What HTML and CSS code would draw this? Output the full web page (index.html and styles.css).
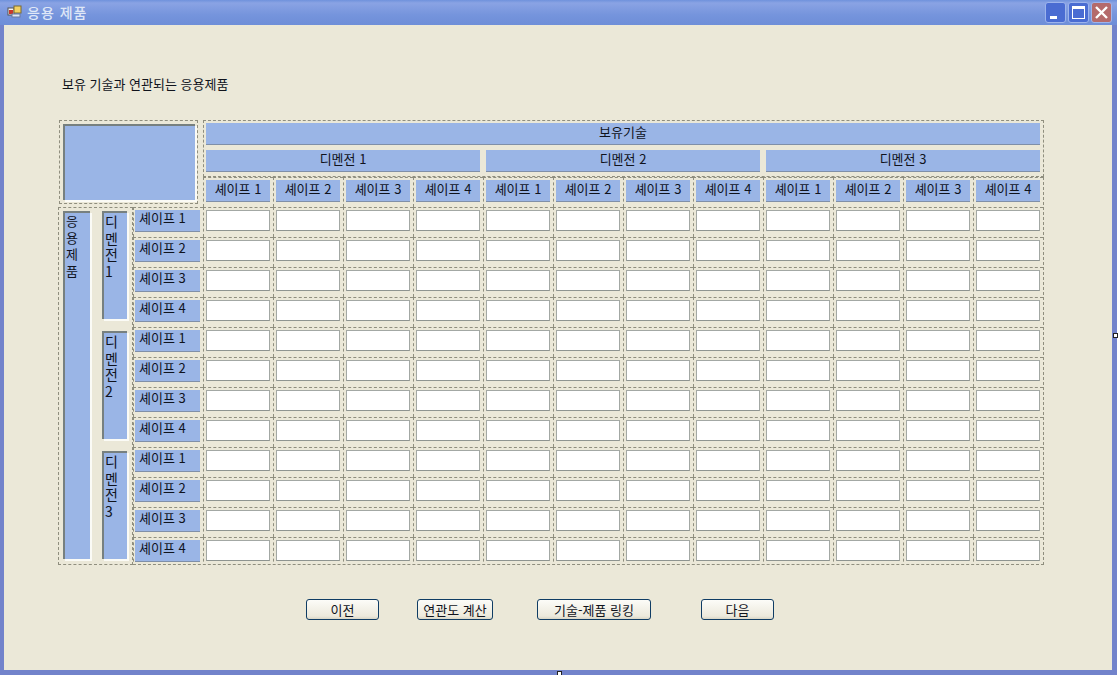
FILE: index.html
```html
<!DOCTYPE html>
<html lang="ko">
<head>
<meta charset="utf-8">
<title>응용 제품</title>
<link rel="stylesheet" href="styles.css">
</head>
<body>
<div class="window">
  <div class="titlebar">
    <svg class="app-icon" width="16" height="16" viewBox="0 0 16 16"><rect x="1" y="4" width="6" height="7" fill="#f4f4f4" stroke="#555"/><rect x="2" y="6" width="4" height="4" fill="#c8382c"/><rect x="7" y="2" width="7" height="7" fill="#f3d163" stroke="#7a6a30"/><rect x="5" y="10" width="8" height="3" fill="#dfe6f4" stroke="#6b7aa0"/></svg>
    <span class="title">응용 제품</span>
    <div class="controls">
      <span class="ctl"><svg width="21" height="21" viewBox="0 0 21 21"><rect x="5" y="14" width="7" height="3" fill="#fff"/></svg></span>
      <span class="ctl"><svg width="21" height="21" viewBox="0 0 21 21"><rect x="4.5" y="4.5" width="12" height="12" fill="none" stroke="#fff"/><rect x="4" y="4" width="13" height="3" fill="#fff"/></svg></span>
      <span class="ctl close"><svg width="21" height="21" viewBox="0 0 21 21"><path d="M5 5L16 16M16 5L5 16" stroke="#fff" stroke-width="2.4" fill="none"/></svg></span>
    </div>
  </div>
  <div class="client">
    <p class="intro">보유 기술과 연관되는 응용제품</p>
    <div class="matrix">
      <div class="corner dash"><div class="corner-fill"></div></div>
      <div class="top dash">
        <div class="head wide">보유기술</div>
        <div class="dims">
          <div class="head">디멘전 1</div>
          <div class="head">디멘전 2</div>
          <div class="head">디멘전 3</div>
        </div>
      </div>
      <div class="side dash">
        <div class="vert all">응<br>용<br>제<br>품</div>
        <div class="vert-col">
          <div class="vert">디<br>멘<br>전<br>1</div>
          <div class="vert">디<br>멘<br>전<br>2</div>
          <div class="vert">디<br>멘<br>전<br>3</div>
        </div>
      </div>
      <div class="grid" id="grid"></div>
    </div>
    <div class="buttons">
      <button class="btn b1">이전</button>
      <button class="btn b2">연관도 계산</button>
      <button class="btn b3">기술-제품 링킹</button>
      <button class="btn b4">다음</button>
    </div>
  </div>
  <span class="handle h-right"></span>
  <span class="handle h-bottom"></span>
</div>
<script src="app.js"></script>
</body>
</html>
```
FILE: app.js
```js
var g = document.getElementById('grid');
var html = '<div class="blank"></div>';
for (var c = 0; c < 12; c++) {
  html += '<div class="cell"><div class="head col">셰이프 ' + (c % 4 + 1) + '</div></div>';
}
for (var r = 0; r < 12; r++) {
  html += '<div class="cell"><div class="head rowlabel">셰이프 ' + (r % 4 + 1) + '</div></div>';
  for (var i = 0; i < 12; i++) {
    html += '<div class="cell"><div class="input"></div></div>';
  }
}
g.innerHTML = html;
```
FILE: styles.css
```css
* { box-sizing: border-box; }
html, body { margin: 0; padding: 0; background: #fff; }
body { width: 1118px; height: 675px; overflow: hidden; font-family: "Noto Sans CJK KR", "Liberation Sans", sans-serif; font-size: 13px; color: #10131c; }
.window { position: relative; width: 1117px; height: 675px; background: #7283cb; padding: 0 5px 5px 4px; display: flex; flex-direction: column; }
.titlebar { height: 25px; margin: 0 -5px 0 -4px; padding: 0 5px 0 7px; display: flex; align-items: center; background: linear-gradient(#6f92dc 0, #8aa3e4 12%, #7594dc 60%, #6e8ed8 100%); }
.app-icon { flex: none; margin-top: -2px; }
.title { margin: -2px 0 0 4px; color: #dfe7f7; font-size: 14px; letter-spacing: 1px; font-weight: 500; }
.controls { margin-left: auto; display: flex; gap: 2px; margin-top: -1px; }
.ctl { width: 21px; height: 21px; border-radius: 3px; background: #4a6cd2; border: 1px solid #9db4ec; display: block; overflow: hidden; }
.ctl svg { display: block; margin: -1px; }
.ctl.close { background: #b46a6c; }
.client { flex: 1; background: #ebe8d8; padding: 50px 0 0 54px; display: flex; flex-direction: column; }
.intro { margin: 0; height: 18px; line-height: 18px; padding-left: 4px; }
.matrix { margin-top: 27px; width: 986px; display: grid; grid-template-columns: 75px 70px 1fr; grid-template-rows: 57px 30px 358px; }
.dash { border: 1px dashed #8f8e7e; }
.corner { grid-column: 1 / 3; grid-row: 1 / 3; margin: 0 5px 3px 1px; padding: 3px; height: 84px; }
.corner-fill { height: 76px; width: 132px; background: #9ab5e6; border-top: 2px solid #77807f; border-left: 2px solid #77807f; box-shadow: 2px 2px 0 #fbfbf6; }
.top { grid-column: 3; grid-row: 1; padding: 2px 3px 2px 2px; }
.head { background: #9ab5e6; text-align: center; height: 21px; line-height: 17px; box-shadow: 0 1px 0 #7f8fa8; }
.wide { margin-bottom: 6px; }
.dims { display: grid; grid-template-columns: repeat(3, 274px); column-gap: 6px; }
.side { grid-column: 1; grid-row: 2 / 4; margin-top: 30px; padding: 3px 4px; display: flex; gap: 12px; height: 358px; }
.vert { background: #9ab5e6; border-top: 2px solid #77807f; border-left: 2px solid #77807f; box-shadow: 2px 2px 0 #fbfbf6; text-align: left; }
.all { width: 27px; height: 348px; padding: 0 0 0 1px; line-height: 16.5px; }
.vert-col { display: flex; flex-direction: column; gap: 12px; }
.vert-col .vert { width: 25px; height: 108px; padding: 0 0 0 1px; line-height: 16.5px; font-size: 14px; }
.grid { grid-column: 2 / 4; grid-row: 2 / 4; display: grid; grid-template-columns: repeat(13, 70px); grid-auto-rows: 30px; border-right: 1px dashed #8f8e7e; border-bottom: 1px dashed #8f8e7e; height: 388px; width: 911px; overflow: hidden; }
.cell { border-top: 1px dashed #8f8e7e; border-left: 1px dashed #8f8e7e; padding: 2px 3px 0 2px; }
.rowlabel { text-align: left; padding-left: 4px; line-height: 15px; }
.cell:nth-child(13n+1) { padding-left: 1px; }
.input { height: 21px; background: #fff; border: 1px solid #a3a8a4; border-bottom-color: #8e9490; }
.buttons { margin-top: 34px; display: flex; padding-left: 248px; }
.btn { height: 21px; padding: 0; background: linear-gradient(#fcfcf8, #ece9dc 85%, #d9d6c6); border: 1px solid #0f3c64; border-radius: 3px; font: inherit; color: inherit; }
.b1 { width: 73px; }
.b2 { width: 76px; margin-left: 38px; }
.b3 { width: 114px; margin-left: 44px; }
.b4 { width: 73px; margin-left: 50px; }
.handle { position: absolute; width: 5px; height: 5px; background: #fff; border: 1px solid #222; }
.h-right { left: 1113px; top: 333px; }
.h-bottom { left: 557px; top: 671px; }
```
